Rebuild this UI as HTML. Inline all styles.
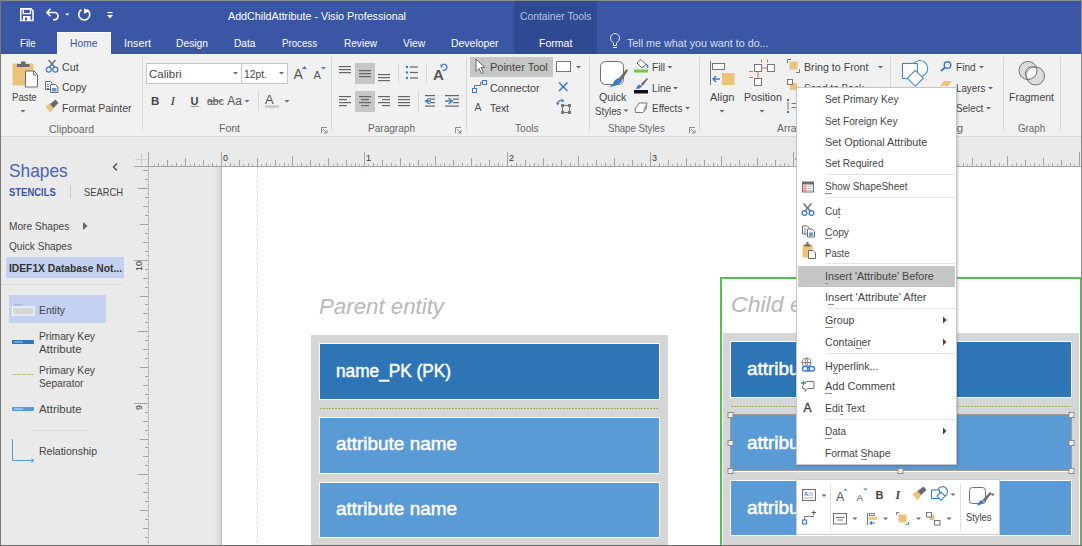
<!DOCTYPE html>
<html><head><meta charset="utf-8">
<style>
*{margin:0;padding:0;box-sizing:border-box}
html,body{width:1082px;height:546px;overflow:hidden;background:#EAEAEA}
body{position:relative;font-family:"Liberation Sans",sans-serif;font-size:11px;color:#444}
.a{position:absolute}
.t{position:absolute;white-space:pre;line-height:1}
.s{position:absolute;overflow:visible}
</style></head><body>
<div class="a" style="left:0px;top:0px;width:1082px;height:54px;background:#3A56A5;"></div>
<div class="a" style="left:514px;top:0px;width:83px;height:54px;background:#2F4993;"></div>
<div class="t" style="left:228px;top:11.27px;font-size:11.5px;color:#FFFFFF;font-weight:400;font-style:normal;transform-origin:0 0;transform:scaleX(0.9323);">AddChildAttribute - Visio Professional</div>
<div class="t" style="left:520px;top:11.19px;font-size:11px;color:#B7C2E2;font-weight:400;font-style:normal;transform-origin:0 0;transform:scaleX(0.9379);">Container Tools</div>
<div class="a" style="left:57px;top:32px;width:54px;height:22px;background:#F1F1F1;border:1px solid #FAFAFA;border-bottom:none"></div>
<div class="t" style="left:19.5px;top:37.77px;font-size:11.5px;color:#FFFFFF;font-weight:400;font-style:normal;transform-origin:0 0;transform:scaleX(0.8418);">File</div>
<div class="t" style="left:69.7px;top:37.77px;font-size:11.5px;color:#3A56A5;font-weight:400;font-style:normal;transform-origin:0 0;transform:scaleX(0.8961);">Home</div>
<div class="t" style="left:124px;top:37.77px;font-size:11.5px;color:#FFFFFF;font-weight:400;font-style:normal;transform-origin:0 0;transform:scaleX(0.9386);">Insert</div>
<div class="t" style="left:176px;top:37.77px;font-size:11.5px;color:#FFFFFF;font-weight:400;font-style:normal;transform-origin:0 0;transform:scaleX(0.8935);">Design</div>
<div class="t" style="left:234px;top:37.77px;font-size:11.5px;color:#FFFFFF;font-weight:400;font-style:normal;transform-origin:0 0;transform:scaleX(0.8849);">Data</div>
<div class="t" style="left:282px;top:37.77px;font-size:11.5px;color:#FFFFFF;font-weight:400;font-style:normal;transform-origin:0 0;transform:scaleX(0.8424);">Process</div>
<div class="t" style="left:343.5px;top:37.77px;font-size:11.5px;color:#FFFFFF;font-weight:400;font-style:normal;transform-origin:0 0;transform:scaleX(0.8749);">Review</div>
<div class="t" style="left:402.5px;top:37.77px;font-size:11.5px;color:#FFFFFF;font-weight:400;font-style:normal;transform-origin:0 0;transform:scaleX(0.8981);">View</div>
<div class="t" style="left:450.7px;top:37.77px;font-size:11.5px;color:#FFFFFF;font-weight:400;font-style:normal;transform-origin:0 0;transform:scaleX(0.9080);">Developer</div>
<div class="t" style="left:538.6px;top:37.77px;font-size:11.5px;color:#FFFFFF;font-weight:400;font-style:normal;transform-origin:0 0;transform:scaleX(0.9170);">Format</div>
<div class="t" style="left:627px;top:37.69px;font-size:11px;color:#D9DFF0;font-weight:400;font-style:normal;transform-origin:0 0;transform:scaleX(0.9771);">Tell me what you want to do...</div>
<div class="a" style="left:0px;top:54px;width:1082px;height:82px;background:#F1F1F1;"></div>
<div class="a" style="left:0px;top:136px;width:1082px;height:1px;background:#D5D5D5;"></div>
<div class="a" style="left:142px;top:57px;width:1px;height:75px;background:#DADADA;"></div>
<div class="a" style="left:331px;top:57px;width:1px;height:75px;background:#DADADA;"></div>
<div class="a" style="left:466px;top:57px;width:1px;height:75px;background:#DADADA;"></div>
<div class="a" style="left:589px;top:57px;width:1px;height:75px;background:#DADADA;"></div>
<div class="a" style="left:699px;top:57px;width:1px;height:75px;background:#DADADA;"></div>
<div class="a" style="left:890px;top:57px;width:1px;height:75px;background:#DADADA;"></div>
<div class="a" style="left:1003px;top:57px;width:1px;height:75px;background:#DADADA;"></div>
<div class="a" style="left:1060px;top:57px;width:1px;height:75px;background:#DADADA;"></div>
<div class="t" style="left:11.5px;top:92.27px;font-size:11.5px;color:#444444;font-weight:400;font-style:normal;transform-origin:0 0;transform:scaleX(0.8395);">Paste</div>
<div class="t" style="left:62px;top:61.77px;font-size:11.5px;color:#444444;font-weight:400;font-style:normal;transform-origin:0 0;transform:scaleX(0.9326);">Cut</div>
<div class="t" style="left:62px;top:82.27px;font-size:11.5px;color:#444444;font-weight:400;font-style:normal;transform-origin:0 0;transform:scaleX(0.9159);">Copy</div>
<div class="t" style="left:62px;top:102.77px;font-size:11.5px;color:#444444;font-weight:400;font-style:normal;transform-origin:0 0;transform:scaleX(0.9137);">Format Painter</div>
<div class="t" style="left:48.8px;top:123.57px;font-size:11.5px;color:#666666;font-weight:400;font-style:normal;transform-origin:0 0;transform:scaleX(0.9140);">Clipboard</div>
<div class="a" style="left:146px;top:63px;width:96px;height:21px;background:#FFFFFF;border:1px solid #C6C6C6"></div>
<div class="a" style="left:241px;top:63px;width:47px;height:21px;background:#FFFFFF;border:1px solid #C6C6C6"></div>
<div class="t" style="left:149px;top:69.27px;font-size:11.5px;color:#444444;font-weight:400;font-style:normal;transform-origin:0 0;transform:scaleX(0.9971);">Calibri</div>
<div class="t" style="left:243.7px;top:69.27px;font-size:11.5px;color:#444444;font-weight:400;font-style:normal;transform-origin:0 0;transform:scaleX(0.8992);">12pt.</div>
<div class="t" style="left:218.5px;top:123.27px;font-size:11.5px;color:#666666;font-weight:400;font-style:normal;transform-origin:0 0;transform:scaleX(0.9124);">Font</div>
<div class="t" style="left:367.8px;top:123.27px;font-size:11.5px;color:#666666;font-weight:400;font-style:normal;transform-origin:0 0;transform:scaleX(0.8749);">Paragraph</div>
<div class="a" style="left:470px;top:57px;width:83px;height:20px;background:#C6C6C6;"></div>
<div class="t" style="left:489.6px;top:61.77px;font-size:11.5px;color:#444444;font-weight:400;font-style:normal;transform-origin:0 0;transform:scaleX(0.9549);">Pointer Tool</div>
<div class="t" style="left:489.6px;top:82.57px;font-size:11.5px;color:#444444;font-weight:400;font-style:normal;transform-origin:0 0;transform:scaleX(0.9347);">Connector</div>
<div class="t" style="left:489.6px;top:102.77px;font-size:11.5px;color:#444444;font-weight:400;font-style:normal;transform-origin:0 0;transform:scaleX(0.9007);">Text</div>
<div class="t" style="left:515px;top:123.27px;font-size:11.5px;color:#666666;font-weight:400;font-style:normal;transform-origin:0 0;transform:scaleX(0.8824);">Tools</div>
<div class="t" style="left:599px;top:91.77px;font-size:11.5px;color:#444444;font-weight:400;font-style:normal;transform-origin:0 0;transform:scaleX(0.9318);">Quick</div>
<div class="t" style="left:594.8px;top:105.87px;font-size:11.5px;color:#444444;font-weight:400;font-style:normal;transform-origin:0 0;transform:scaleX(0.8427);">Styles</div>
<div class="t" style="left:651.5px;top:61.77px;font-size:11.5px;color:#444444;font-weight:400;font-style:normal;transform-origin:0 0;transform:scaleX(0.8842);">Fill</div>
<div class="t" style="left:651.5px;top:82.57px;font-size:11.5px;color:#444444;font-weight:400;font-style:normal;transform-origin:0 0;transform:scaleX(0.8874);">Line</div>
<div class="t" style="left:651.5px;top:102.77px;font-size:11.5px;color:#444444;font-weight:400;font-style:normal;transform-origin:0 0;transform:scaleX(0.8697);">Effects</div>
<div class="t" style="left:608.3px;top:123.27px;font-size:11.5px;color:#666666;font-weight:400;font-style:normal;transform-origin:0 0;transform:scaleX(0.8367);">Shape Styles</div>
<div class="t" style="left:710px;top:91.77px;font-size:11.5px;color:#444444;font-weight:400;font-style:normal;transform-origin:0 0;transform:scaleX(0.9539);">Align</div>
<div class="t" style="left:743.5px;top:91.77px;font-size:11.5px;color:#444444;font-weight:400;font-style:normal;transform-origin:0 0;transform:scaleX(0.9237);">Position</div>
<div class="t" style="left:804.2px;top:61.77px;font-size:11.5px;color:#444444;font-weight:400;font-style:normal;transform-origin:0 0;transform:scaleX(0.9258);">Bring to Front</div>
<div class="t" style="left:804.2px;top:82.57px;font-size:11.5px;color:#444444;font-weight:400;font-style:normal;transform-origin:0 0;transform:scaleX(0.8771);">Send to Back</div>
<div class="t" style="left:776.9px;top:123.27px;font-size:11.5px;color:#666666;font-weight:400;font-style:normal;transform-origin:0 0;transform:scaleX(0.9042);">Arrange</div>
<div class="t" style="left:956.2px;top:61.77px;font-size:11.5px;color:#444444;font-weight:400;font-style:normal;transform-origin:0 0;transform:scaleX(0.8804);">Find</div>
<div class="t" style="left:956px;top:82.57px;font-size:11.5px;color:#444444;font-weight:400;font-style:normal;transform-origin:0 0;transform:scaleX(0.8485);">Layers</div>
<div class="t" style="left:956px;top:102.77px;font-size:11.5px;color:#444444;font-weight:400;font-style:normal;transform-origin:0 0;transform:scaleX(0.8540);">Select</div>
<div class="t" style="left:928px;top:123.27px;font-size:11.5px;color:#666666;font-weight:400;font-style:normal;transform-origin:0 0;transform:scaleX(0.9951);">Editing</div>
<div class="t" style="left:1009px;top:91.77px;font-size:11.5px;color:#444444;font-weight:400;font-style:normal;transform-origin:0 0;transform:scaleX(0.9143);">Fragment</div>
<div class="t" style="left:1018.4px;top:123.27px;font-size:11.5px;color:#666666;font-weight:400;font-style:normal;transform-origin:0 0;transform:scaleX(0.8508);">Graph</div>
<svg class="s" style="left:0;top:0" width="1082" height="546"><rect x="12.5" y="63.5" width="21" height="22" rx="1" fill="#EBC37B"/><path d="M17 67 V64 H21 V61.5 H25.5 V64 H29.5 V67 Z" fill="#6A6A6A"/><path d="M25.5 71 H34 L37.5 74.5 V87 H25.5 Z" fill="#FFFFFF" stroke="#6A6A6A" stroke-width="1"/><path d="M33.5 71 V75 H37.5" fill="none" stroke="#6A6A6A" stroke-width="1"/><path d="M20.5 110 H25.5 L23 112.5 Z" fill="#6A6A6A"/><path d="M48.5 60 L55 67.5 M55.5 60 L49 67.5" stroke="#6A6A6A" stroke-width="1.4" fill="none"/><circle cx="48.8" cy="69.6" r="2.5" fill="none" stroke="#3D7CC9" stroke-width="1.3"/><circle cx="55.4" cy="69.6" r="2.5" fill="none" stroke="#3D7CC9" stroke-width="1.3"/><path d="M45.5 81.5 H50.5 L52 83 V89.5 H45.5 Z" fill="#FFFFFF" stroke="#6A6A6A" stroke-width="1"/><path d="M47 84.5 H49 M47 86.5 H49 M47 88.5 H49" stroke="#3D7CC9" stroke-width="1"/><path d="M50.5 84.5 H55.5 L58 87 V92.5 H50.5 Z" fill="#FFFFFF" stroke="#6A6A6A" stroke-width="1"/><rect x="52" y="88" width="4.5" height="3.5" fill="#3D7CC9" opacity="0.8"/><path d="M45.5 106.5 L50.5 103 L54 107.5 L50.5 113 Z" fill="#EBC37B"/><path d="M50 104 L55.5 99.5 L58.5 103 L53.5 108 Z" fill="#6A6A6A"/><path d="M233 72 H238 L235.5 74.5 Z" fill="#6A6A6A"/><path d="M279 72 H284 L281.5 74.5 Z" fill="#6A6A6A"/><text x="293.5" y="79" font-family="Liberation Sans" font-size="14" fill="#555">A</text><path d="M302 69 L304.5 66 L307 69 Z" fill="#3D7CC9"/><text x="313.5" y="79" font-family="Liberation Sans" font-size="11" fill="#555">A</text><path d="M321 67 H326 L323.5 69.5 Z" fill="#3D7CC9"/><text x="151" y="104.5" font-family="Liberation Sans" font-size="11.5" font-weight="700" fill="#444">B</text><text x="170.5" y="105" font-family="Liberation Serif" font-size="13.5" font-style="italic" fill="#444">I</text><text x="190.5" y="104.5" font-family="Liberation Sans" font-size="11" font-weight="700" fill="#444">U</text><rect x="190.5" y="106" width="8.5" height="1" fill="#999"/><text x="207" y="104.5" font-family="Liberation Sans" font-size="10.5" fill="#555">abc</text><rect x="207" y="100.5" width="15" height="1" fill="#555"/><text x="227.3" y="104.5" font-family="Liberation Sans" font-size="12" fill="#555">Aa</text><path d="M244.5 100 H249.5 L247 102.5 Z" fill="#6A6A6A"/><rect x="258" y="91" width="1" height="19" fill="#D5D5D5"/><text x="265" y="104" font-family="Liberation Sans" font-size="13" fill="#555">A</text><rect x="265" y="105.5" width="14" height="2" fill="#BDBDBD"/><path d="M284.5 100 H289.5 L287 102.5 Z" fill="#6A6A6A"/><path d="M321.5 133 V127.5 H327" fill="none" stroke="#8A8A8A" stroke-width="1"/><path d="M323 129 L327 133 M327 130 V133 H324" fill="none" stroke="#8A8A8A" stroke-width="1"/><path d="M455.5 133 V127.5 H461" fill="none" stroke="#8A8A8A" stroke-width="1"/><path d="M457 129 L461 133 M461 130 V133 H458" fill="none" stroke="#8A8A8A" stroke-width="1"/><path d="M689.5 133 V127.5 H695" fill="none" stroke="#8A8A8A" stroke-width="1"/><path d="M691 129 L695 133 M695 130 V133 H692" fill="none" stroke="#8A8A8A" stroke-width="1"/><rect x="355" y="63" width="20" height="21" fill="#C6C6C6"/><rect x="355" y="91" width="20" height="21" fill="#C6C6C6"/><rect x="339" y="66" width="12" height="1.2" fill="#666"/><rect x="339" y="69" width="12" height="1.2" fill="#666"/><rect x="339" y="72" width="12" height="1.2" fill="#666"/><rect x="359" y="70" width="12" height="1.2" fill="#666"/><rect x="359" y="73" width="12" height="1.2" fill="#666"/><rect x="359" y="76" width="12" height="1.2" fill="#666"/><rect x="378" y="74" width="12" height="1.2" fill="#666"/><rect x="378" y="77" width="12" height="1.2" fill="#666"/><rect x="378" y="80" width="12" height="1.2" fill="#666"/><rect x="398" y="63" width="1" height="20" fill="#D5D5D5"/><circle cx="407" cy="67.0" r="1.2" fill="#3D7CC9"/><rect x="410" y="66.4" width="8" height="1.2" fill="#666"/><circle cx="407" cy="72.5" r="1.2" fill="#3D7CC9"/><rect x="410" y="71.9" width="8" height="1.2" fill="#666"/><circle cx="407" cy="78.0" r="1.2" fill="#3D7CC9"/><rect x="410" y="77.4" width="8" height="1.2" fill="#666"/><rect x="426" y="63" width="1" height="20" fill="#D5D5D5"/><text x="433" y="79.5" font-family="Liberation Sans" font-size="15" font-weight="700" fill="#555">A</text><path d="M442.5 70 A3 3 0 1 0 441.5 65.5" fill="none" stroke="#3D7CC9" stroke-width="1.2"/><path d="M440 64 L443 66.5 L441 68 Z" fill="#3D7CC9"/><rect x="339" y="96" width="12" height="1.2" fill="#666"/><rect x="339" y="99" width="8" height="1.2" fill="#666"/><rect x="339" y="102" width="12" height="1.2" fill="#666"/><rect x="339" y="105" width="8" height="1.2" fill="#666"/><rect x="359" y="96" width="12" height="1.2" fill="#666"/><rect x="361" y="99" width="8" height="1.2" fill="#666"/><rect x="359" y="102" width="12" height="1.2" fill="#666"/><rect x="361" y="105" width="8" height="1.2" fill="#666"/><rect x="378" y="96" width="12" height="1.2" fill="#666"/><rect x="382" y="99" width="8" height="1.2" fill="#666"/><rect x="378" y="102" width="12" height="1.2" fill="#666"/><rect x="382" y="105" width="8" height="1.2" fill="#666"/><rect x="398" y="96" width="12" height="1.2" fill="#666"/><rect x="398" y="99" width="12" height="1.2" fill="#666"/><rect x="398" y="102" width="12" height="1.2" fill="#666"/><rect x="398" y="105" width="12" height="1.2" fill="#666"/><rect x="418" y="91" width="1" height="20" fill="#D5D5D5"/><rect x="425" y="95.0" width="10" height="1.2" fill="#666"/><rect x="430" y="98.5" width="5" height="1.2" fill="#666"/><rect x="430" y="102.0" width="5" height="1.2" fill="#666"/><rect x="425" y="105.5" width="10" height="1.2" fill="#666"/><path d="M429.5 98 L425.5 101 L429.5 104 M426 101 H431" fill="none" stroke="#3D7CC9" stroke-width="1.3"/><rect x="445" y="95.0" width="14" height="1.2" fill="#666"/><rect x="453" y="98.5" width="6" height="1.2" fill="#666"/><rect x="453" y="102.0" width="6" height="1.2" fill="#666"/><rect x="445" y="105.5" width="14" height="1.2" fill="#666"/><path d="M448.5 98 L452.5 101 L448.5 104 M445 101 H452" fill="none" stroke="#3D7CC9" stroke-width="1.3"/><path d="M476 59 V71.5 L479 68.5 L481.5 73.5 L483.5 72.5 L481 67.5 H485 Z" fill="#FFFFFF" stroke="#666" stroke-width="1"/><rect x="556.5" y="61.5" width="14" height="10" fill="#FFFFFF" stroke="#777" stroke-width="1"/><path d="M576 66 H581 L578.5 68.5 Z" fill="#6A6A6A"/><rect x="472.5" y="88.5" width="4" height="4" fill="none" stroke="#3D7CC9" stroke-width="1"/><rect x="482.5" y="80.5" width="4" height="4" fill="none" stroke="#3D7CC9" stroke-width="1"/><path d="M474.5 88.5 V85.5 H480.5 V82.5 H482.5" fill="none" stroke="#777" stroke-width="1"/><path d="M559 82.5 L567.5 91 M567.5 82.5 L559 91" stroke="#3D7CC9" stroke-width="1.6"/><text x="474.5" y="111" font-family="Liberation Sans" font-size="10.5" fill="#555">A</text><rect x="562.5" y="105.5" width="7" height="7" fill="none" stroke="#777" stroke-width="1.2"/><rect x="561.0" y="104.0" width="3" height="3" fill="#777"/><rect x="568.0" y="104.0" width="3" height="3" fill="#777"/><rect x="561.0" y="111.0" width="3" height="3" fill="#777"/><rect x="568.0" y="111.0" width="3" height="3" fill="#777"/><path d="M557.5 104 A4 4 0 0 1 563 100.5" fill="none" stroke="#3D7CC9" stroke-width="1.2"/><path d="M562 99 L564.5 101 L561.5 102.5 Z" fill="#3D7CC9"/><path d="M556 102.5 L557.5 105.5 L559.5 103 Z" fill="#3D7CC9"/><rect x="600.5" y="61.5" width="23" height="23" rx="5" fill="#FFFFFF" stroke="#6E6E6E" stroke-width="1"/><path d="M613 84 Q614 79 619 78 L622 81 Q619 86 609 87 Z" fill="#3D7CC9"/><path d="M618.5 78.5 L626.5 69 L628 70.5 L621.5 81 Z" fill="#6E6E6E"/><path d="M623.5 109.5 H628.5 L626 112 Z" fill="#6A6A6A"/><path d="M637 63 L641 59.5 L646 64.5 L642 68 Z" fill="#FFFFFF" stroke="#666" stroke-width="1"/><path d="M646 64 Q648.5 66 647.5 68" fill="none" stroke="#3D7CC9" stroke-width="1.3"/><rect x="634" y="69.5" width="14" height="3" fill="#7BC443"/><path d="M667.5 66 H672.5 L670 68.5 Z" fill="#6A6A6A"/><path d="M636 89 Q637 85 640 84.5 L642 86.5 Q640 89 636 89 Z" fill="#3D7CC9"/><path d="M641 84 L647 78 L648 79 L642.5 86 Z" fill="#666"/><rect x="634" y="90" width="14" height="3.5" fill="#111"/><path d="M673 87 H678 L675.5 89.5 Z" fill="#6A6A6A"/><path d="M635 109 L639 103 H647 L646 109 L643 112.5 H635.5 Z" fill="#FFFFFF" stroke="#777" stroke-width="1"/><path d="M643 112.5 L646 109 L647 103 L644 108 Z" fill="#9A9A9A"/><path d="M685 107 H690 L687.5 109.5 Z" fill="#6A6A6A"/><rect x="710" y="61" width="1" height="24" fill="#777"/><rect x="712.5" y="63.5" width="12" height="6" fill="#FFFFFF" stroke="#777" stroke-width="1"/><rect x="722" y="73" width="12.5" height="12" fill="#EBC37B"/><path d="M713 79 H720 M716 76 L713 79 L716 82" fill="none" stroke="#3D7CC9" stroke-width="1.4"/><path d="M719.5 110 H724.5 L722 112.5 Z" fill="#6A6A6A"/><rect x="754.5" y="64.5" width="7" height="7" fill="#FFFFFF" stroke="#777" stroke-width="1"/><rect x="767.5" y="64.5" width="7" height="7" fill="#FFFFFF" stroke="#777" stroke-width="1"/><rect x="754.5" y="78.5" width="7" height="7" fill="#FFFFFF" stroke="#777" stroke-width="1"/><path d="M762 68 H767 M758 72 V78" stroke="#E07050" stroke-width="1"/><path d="M761.5 59.5 V62.5 M767.5 59.5 V62.5 M749 71.5 H753 M749 77.5 H753" stroke="#E07050" stroke-width="1"/><path d="M759.5 110 H764.5 L762 112.5 Z" fill="#6A6A6A"/><path d="M787.5 63 V59.5 H791" fill="none" stroke="#777" stroke-width="1"/><path d="M799.5 69 V72.5 H796" fill="none" stroke="#777" stroke-width="1"/><rect x="789.5" y="61.5" width="8" height="8" fill="#EBC37B"/><path d="M878 66 H883 L880.5 68.5 Z" fill="#6A6A6A"/><rect x="790" y="83" width="7" height="7" fill="#EBC37B"/><rect x="787.5" y="79.5" width="5" height="5" fill="#FFFFFF" stroke="#777" stroke-width="1"/><rect x="787" y="99" width="2" height="2" fill="#3D7CC9"/><rect x="787" y="111" width="2" height="2" fill="#3D7CC9"/><path d="M788 102 V110 M791.5 103.5 H797 M791.5 107.5 H797" stroke="#777" stroke-width="1"/><circle cx="919.7" cy="68.5" r="8" fill="#FFFFFF" stroke="#4A86C8" stroke-width="1.1"/><rect x="902.5" y="63.5" width="15" height="15" fill="#FFFFFF" stroke="#4A86C8" stroke-width="1.1"/><path d="M915.3 70.3 L923.3 78.2 L915.3 86.1 L907.3 78.2 Z" fill="#FFFFFF" stroke="#4A86C8" stroke-width="1.1"/><circle cx="947.5" cy="65" r="3.3" fill="none" stroke="#3D7CC9" stroke-width="1.4"/><path d="M945 67.5 L941 71" stroke="#3D7CC9" stroke-width="2"/><path d="M940 86 L944 81 H952 L948 86 Z" fill="#EBC37B"/><path d="M979 66 H984 L981.5 68.5 Z" fill="#6A6A6A"/><path d="M988 87 H993 L990.5 89.5 Z" fill="#6A6A6A"/><path d="M986 107 H991 L988.5 109.5 Z" fill="#6A6A6A"/><defs><clipPath id="fragc"><circle cx="1035.5" cy="76" r="9"/></clipPath></defs><circle cx="1028" cy="70.5" r="9" fill="#DCDCDC" stroke="#707070" stroke-width="1"/><circle cx="1035.5" cy="76" r="9" fill="#DCDCDC" stroke="#707070" stroke-width="1"/><circle cx="1028" cy="70.5" r="9" fill="#F4F4F4" stroke="#707070" stroke-width="1" clip-path="url(#fragc)"/><path d="M1029 80 A7 7 0 0 1 1036 67.5" fill="none" stroke="#707070" stroke-width="1"/><path d="M613.5 45.5 V43 Q610.5 41 610.5 38 A4.5 4.5 0 0 1 619.5 38 Q619.5 41 616.5 43 V45.5 Z" fill="none" stroke="#E6EAF5" stroke-width="1"/><rect x="613" y="47" width="4" height="1" fill="#E6EAF5"/><path d="M20.8 8.8 H31 L33 10.8 V20.6 H20.8 Z" fill="none" stroke="#FFFFFF" stroke-width="1.5"/><rect x="23.2" y="9" width="7.3" height="4.6" fill="none" stroke="#FFFFFF" stroke-width="1.3"/><rect x="23" y="16" width="7.5" height="4.5" fill="#FFFFFF"/><rect x="25" y="17.5" width="2" height="3" fill="#3A56A5"/><path d="M47 12.5 H54.5 A3.6 3.6 0 0 1 54.5 19.7 H53" fill="none" stroke="#FFFFFF" stroke-width="1.6"/><path d="M50.5 8.8 L46.8 12.5 L50.5 16.2" fill="none" stroke="#FFFFFF" stroke-width="1.6"/><path d="M65 13.5 H69.5 L67.25 15.8 Z" fill="#FFFFFF"/><path d="M81.5 9.8 A5.5 5.5 0 1 0 87 9.8" fill="none" stroke="#FFFFFF" stroke-width="1.6"/><path d="M84 8.2 L84 13.8 L89.5 11.2 Z" fill="#FFFFFF"/><rect x="107.5" y="12" width="5" height="1.2" fill="#FFFFFF"/><path d="M107 15 H113 L110 18.5 Z" fill="#FFFFFF"/></svg>
<div class="t" style="left:9.2px;top:161.42px;font-size:19px;color:#4A64AE;font-weight:400;font-style:normal;transform-origin:0 0;transform:scaleX(0.9123);">Shapes</div>
<div class="t" style="left:9.4px;top:187.09px;font-size:11px;color:#3A56A5;font-weight:700;font-style:normal;transform-origin:0 0;transform:scaleX(0.8602);">STENCILS</div>
<div class="a" style="left:70px;top:185px;width:1px;height:13px;background:#C8C8C8;"></div>
<div class="t" style="left:83.5px;top:186.67px;font-size:11.5px;color:#444444;font-weight:400;font-style:normal;transform-origin:0 0;transform:scaleX(0.8115);">SEARCH</div>
<div class="t" style="left:8.7px;top:220.87px;font-size:11.5px;color:#444444;font-weight:400;font-style:normal;transform-origin:0 0;transform:scaleX(0.8815);">More Shapes</div>
<div class="t" style="left:8.7px;top:241.27px;font-size:11.5px;color:#444444;font-weight:400;font-style:normal;transform-origin:0 0;transform:scaleX(0.8798);">Quick Shapes</div>
<div class="a" style="left:6px;top:257px;width:118px;height:21px;background:#C5D1F0;"></div>
<div class="t" style="left:8.7px;top:263.49px;font-size:11px;color:#333333;font-weight:700;font-style:normal;transform-origin:0 0;transform:scaleX(0.9335);">IDEF1X Database Not...</div>
<div class="a" style="left:1px;top:284px;width:122px;height:1px;background:#DCDCDC;"></div>
<div class="a" style="left:9px;top:295px;width:97px;height:28px;background:#C5D1F0;"></div>
<div class="t" style="left:39.3px;top:305.27px;font-size:11.5px;color:#444444;font-weight:400;font-style:normal;transform-origin:0 0;transform:scaleX(0.9039);">Entity</div>
<div class="t" style="left:39.3px;top:331.07px;font-size:11.5px;color:#444444;font-weight:400;font-style:normal;transform-origin:0 0;transform:scaleX(0.8942);">Primary Key</div>
<div class="t" style="left:39.3px;top:343.57px;font-size:11.5px;color:#444444;font-weight:400;font-style:normal;transform-origin:0 0;transform:scaleX(0.9923);">Attribute</div>
<div class="t" style="left:39.3px;top:365.07px;font-size:11.5px;color:#444444;font-weight:400;font-style:normal;transform-origin:0 0;transform:scaleX(0.8942);">Primary Key</div>
<div class="t" style="left:39.3px;top:377.67px;font-size:11.5px;color:#444444;font-weight:400;font-style:normal;transform-origin:0 0;transform:scaleX(0.8809);">Separator</div>
<div class="t" style="left:39.3px;top:404.07px;font-size:11.5px;color:#444444;font-weight:400;font-style:normal;transform-origin:0 0;transform:scaleX(0.9923);">Attribute</div>
<div class="a" style="left:30px;top:430px;width:59px;height:1px;background:#DCDCDC;"></div>
<div class="t" style="left:39.3px;top:445.77px;font-size:11.5px;color:#444444;font-weight:400;font-style:normal;transform-origin:0 0;transform:scaleX(0.9163);">Relationship</div>
<svg class="s" style="left:0;top:0" width="1082" height="546" shape-rendering="crispEdges"><rect x="134" y="166" width="947" height="1" fill="#A3A3A3"/><rect x="154" y="164" width="1" height="2" fill="#B8B8B8"/><rect x="158" y="163" width="1" height="3" fill="#A3A3A3"/><rect x="163" y="164" width="1" height="2" fill="#B8B8B8"/><rect x="167" y="160" width="1" height="6" fill="#A3A3A3"/><rect x="172" y="164" width="1" height="2" fill="#B8B8B8"/><rect x="176" y="163" width="1" height="3" fill="#A3A3A3"/><rect x="181" y="164" width="1" height="2" fill="#B8B8B8"/><rect x="185" y="158" width="1" height="8" fill="#A3A3A3"/><rect x="190" y="164" width="1" height="2" fill="#B8B8B8"/><rect x="194" y="163" width="1" height="3" fill="#A3A3A3"/><rect x="199" y="164" width="1" height="2" fill="#B8B8B8"/><rect x="203" y="160" width="1" height="6" fill="#A3A3A3"/><rect x="208" y="164" width="1" height="2" fill="#B8B8B8"/><rect x="212" y="163" width="1" height="3" fill="#A3A3A3"/><rect x="216" y="164" width="1" height="2" fill="#B8B8B8"/><rect x="221" y="152" width="1" height="14" fill="#A3A3A3"/><rect x="225" y="164" width="1" height="2" fill="#B8B8B8"/><rect x="230" y="163" width="1" height="3" fill="#A3A3A3"/><rect x="234" y="164" width="1" height="2" fill="#B8B8B8"/><rect x="239" y="160" width="1" height="6" fill="#A3A3A3"/><rect x="243" y="164" width="1" height="2" fill="#B8B8B8"/><rect x="248" y="163" width="1" height="3" fill="#A3A3A3"/><rect x="252" y="164" width="1" height="2" fill="#B8B8B8"/><rect x="257" y="158" width="1" height="8" fill="#A3A3A3"/><rect x="261" y="164" width="1" height="2" fill="#B8B8B8"/><rect x="266" y="163" width="1" height="3" fill="#A3A3A3"/><rect x="270" y="164" width="1" height="2" fill="#B8B8B8"/><rect x="275" y="160" width="1" height="6" fill="#A3A3A3"/><rect x="279" y="164" width="1" height="2" fill="#B8B8B8"/><rect x="284" y="163" width="1" height="3" fill="#A3A3A3"/><rect x="288" y="164" width="1" height="2" fill="#B8B8B8"/><rect x="292" y="156" width="1" height="10" fill="#A3A3A3"/><rect x="297" y="164" width="1" height="2" fill="#B8B8B8"/><rect x="301" y="163" width="1" height="3" fill="#A3A3A3"/><rect x="306" y="164" width="1" height="2" fill="#B8B8B8"/><rect x="310" y="160" width="1" height="6" fill="#A3A3A3"/><rect x="315" y="164" width="1" height="2" fill="#B8B8B8"/><rect x="319" y="163" width="1" height="3" fill="#A3A3A3"/><rect x="324" y="164" width="1" height="2" fill="#B8B8B8"/><rect x="328" y="158" width="1" height="8" fill="#A3A3A3"/><rect x="333" y="164" width="1" height="2" fill="#B8B8B8"/><rect x="337" y="163" width="1" height="3" fill="#A3A3A3"/><rect x="342" y="164" width="1" height="2" fill="#B8B8B8"/><rect x="346" y="160" width="1" height="6" fill="#A3A3A3"/><rect x="351" y="164" width="1" height="2" fill="#B8B8B8"/><rect x="355" y="163" width="1" height="3" fill="#A3A3A3"/><rect x="359" y="164" width="1" height="2" fill="#B8B8B8"/><rect x="364" y="152" width="1" height="14" fill="#A3A3A3"/><rect x="368" y="164" width="1" height="2" fill="#B8B8B8"/><rect x="373" y="163" width="1" height="3" fill="#A3A3A3"/><rect x="377" y="164" width="1" height="2" fill="#B8B8B8"/><rect x="382" y="160" width="1" height="6" fill="#A3A3A3"/><rect x="386" y="164" width="1" height="2" fill="#B8B8B8"/><rect x="391" y="163" width="1" height="3" fill="#A3A3A3"/><rect x="395" y="164" width="1" height="2" fill="#B8B8B8"/><rect x="400" y="158" width="1" height="8" fill="#A3A3A3"/><rect x="404" y="164" width="1" height="2" fill="#B8B8B8"/><rect x="409" y="163" width="1" height="3" fill="#A3A3A3"/><rect x="413" y="164" width="1" height="2" fill="#B8B8B8"/><rect x="418" y="160" width="1" height="6" fill="#A3A3A3"/><rect x="422" y="164" width="1" height="2" fill="#B8B8B8"/><rect x="427" y="163" width="1" height="3" fill="#A3A3A3"/><rect x="431" y="164" width="1" height="2" fill="#B8B8B8"/><rect x="435" y="156" width="1" height="10" fill="#A3A3A3"/><rect x="440" y="164" width="1" height="2" fill="#B8B8B8"/><rect x="444" y="163" width="1" height="3" fill="#A3A3A3"/><rect x="449" y="164" width="1" height="2" fill="#B8B8B8"/><rect x="453" y="160" width="1" height="6" fill="#A3A3A3"/><rect x="458" y="164" width="1" height="2" fill="#B8B8B8"/><rect x="462" y="163" width="1" height="3" fill="#A3A3A3"/><rect x="467" y="164" width="1" height="2" fill="#B8B8B8"/><rect x="471" y="158" width="1" height="8" fill="#A3A3A3"/><rect x="476" y="164" width="1" height="2" fill="#B8B8B8"/><rect x="480" y="163" width="1" height="3" fill="#A3A3A3"/><rect x="485" y="164" width="1" height="2" fill="#B8B8B8"/><rect x="489" y="160" width="1" height="6" fill="#A3A3A3"/><rect x="494" y="164" width="1" height="2" fill="#B8B8B8"/><rect x="498" y="163" width="1" height="3" fill="#A3A3A3"/><rect x="502" y="164" width="1" height="2" fill="#B8B8B8"/><rect x="507" y="152" width="1" height="14" fill="#A3A3A3"/><rect x="511" y="164" width="1" height="2" fill="#B8B8B8"/><rect x="516" y="163" width="1" height="3" fill="#A3A3A3"/><rect x="520" y="164" width="1" height="2" fill="#B8B8B8"/><rect x="525" y="160" width="1" height="6" fill="#A3A3A3"/><rect x="529" y="164" width="1" height="2" fill="#B8B8B8"/><rect x="534" y="163" width="1" height="3" fill="#A3A3A3"/><rect x="538" y="164" width="1" height="2" fill="#B8B8B8"/><rect x="543" y="158" width="1" height="8" fill="#A3A3A3"/><rect x="547" y="164" width="1" height="2" fill="#B8B8B8"/><rect x="552" y="163" width="1" height="3" fill="#A3A3A3"/><rect x="556" y="164" width="1" height="2" fill="#B8B8B8"/><rect x="561" y="160" width="1" height="6" fill="#A3A3A3"/><rect x="565" y="164" width="1" height="2" fill="#B8B8B8"/><rect x="570" y="163" width="1" height="3" fill="#A3A3A3"/><rect x="574" y="164" width="1" height="2" fill="#B8B8B8"/><rect x="578" y="156" width="1" height="10" fill="#A3A3A3"/><rect x="583" y="164" width="1" height="2" fill="#B8B8B8"/><rect x="587" y="163" width="1" height="3" fill="#A3A3A3"/><rect x="592" y="164" width="1" height="2" fill="#B8B8B8"/><rect x="596" y="160" width="1" height="6" fill="#A3A3A3"/><rect x="601" y="164" width="1" height="2" fill="#B8B8B8"/><rect x="605" y="163" width="1" height="3" fill="#A3A3A3"/><rect x="610" y="164" width="1" height="2" fill="#B8B8B8"/><rect x="614" y="158" width="1" height="8" fill="#A3A3A3"/><rect x="619" y="164" width="1" height="2" fill="#B8B8B8"/><rect x="623" y="163" width="1" height="3" fill="#A3A3A3"/><rect x="628" y="164" width="1" height="2" fill="#B8B8B8"/><rect x="632" y="160" width="1" height="6" fill="#A3A3A3"/><rect x="637" y="164" width="1" height="2" fill="#B8B8B8"/><rect x="641" y="163" width="1" height="3" fill="#A3A3A3"/><rect x="645" y="164" width="1" height="2" fill="#B8B8B8"/><rect x="650" y="152" width="1" height="14" fill="#A3A3A3"/><rect x="654" y="164" width="1" height="2" fill="#B8B8B8"/><rect x="659" y="163" width="1" height="3" fill="#A3A3A3"/><rect x="663" y="164" width="1" height="2" fill="#B8B8B8"/><rect x="668" y="160" width="1" height="6" fill="#A3A3A3"/><rect x="672" y="164" width="1" height="2" fill="#B8B8B8"/><rect x="677" y="163" width="1" height="3" fill="#A3A3A3"/><rect x="681" y="164" width="1" height="2" fill="#B8B8B8"/><rect x="686" y="158" width="1" height="8" fill="#A3A3A3"/><rect x="690" y="164" width="1" height="2" fill="#B8B8B8"/><rect x="695" y="163" width="1" height="3" fill="#A3A3A3"/><rect x="699" y="164" width="1" height="2" fill="#B8B8B8"/><rect x="704" y="160" width="1" height="6" fill="#A3A3A3"/><rect x="708" y="164" width="1" height="2" fill="#B8B8B8"/><rect x="713" y="163" width="1" height="3" fill="#A3A3A3"/><rect x="717" y="164" width="1" height="2" fill="#B8B8B8"/><rect x="721" y="156" width="1" height="10" fill="#A3A3A3"/><rect x="726" y="164" width="1" height="2" fill="#B8B8B8"/><rect x="730" y="163" width="1" height="3" fill="#A3A3A3"/><rect x="735" y="164" width="1" height="2" fill="#B8B8B8"/><rect x="739" y="160" width="1" height="6" fill="#A3A3A3"/><rect x="744" y="164" width="1" height="2" fill="#B8B8B8"/><rect x="748" y="163" width="1" height="3" fill="#A3A3A3"/><rect x="753" y="164" width="1" height="2" fill="#B8B8B8"/><rect x="757" y="158" width="1" height="8" fill="#A3A3A3"/><rect x="762" y="164" width="1" height="2" fill="#B8B8B8"/><rect x="766" y="163" width="1" height="3" fill="#A3A3A3"/><rect x="771" y="164" width="1" height="2" fill="#B8B8B8"/><rect x="775" y="160" width="1" height="6" fill="#A3A3A3"/><rect x="780" y="164" width="1" height="2" fill="#B8B8B8"/><rect x="784" y="163" width="1" height="3" fill="#A3A3A3"/><rect x="788" y="164" width="1" height="2" fill="#B8B8B8"/><rect x="793" y="152" width="1" height="14" fill="#A3A3A3"/><rect x="797" y="164" width="1" height="2" fill="#B8B8B8"/><rect x="802" y="163" width="1" height="3" fill="#A3A3A3"/><rect x="806" y="164" width="1" height="2" fill="#B8B8B8"/><rect x="811" y="160" width="1" height="6" fill="#A3A3A3"/><rect x="815" y="164" width="1" height="2" fill="#B8B8B8"/><rect x="820" y="163" width="1" height="3" fill="#A3A3A3"/><rect x="824" y="164" width="1" height="2" fill="#B8B8B8"/><rect x="829" y="158" width="1" height="8" fill="#A3A3A3"/><rect x="833" y="164" width="1" height="2" fill="#B8B8B8"/><rect x="838" y="163" width="1" height="3" fill="#A3A3A3"/><rect x="842" y="164" width="1" height="2" fill="#B8B8B8"/><rect x="847" y="160" width="1" height="6" fill="#A3A3A3"/><rect x="851" y="164" width="1" height="2" fill="#B8B8B8"/><rect x="856" y="163" width="1" height="3" fill="#A3A3A3"/><rect x="860" y="164" width="1" height="2" fill="#B8B8B8"/><rect x="864" y="156" width="1" height="10" fill="#A3A3A3"/><rect x="869" y="164" width="1" height="2" fill="#B8B8B8"/><rect x="873" y="163" width="1" height="3" fill="#A3A3A3"/><rect x="878" y="164" width="1" height="2" fill="#B8B8B8"/><rect x="882" y="160" width="1" height="6" fill="#A3A3A3"/><rect x="887" y="164" width="1" height="2" fill="#B8B8B8"/><rect x="891" y="163" width="1" height="3" fill="#A3A3A3"/><rect x="896" y="164" width="1" height="2" fill="#B8B8B8"/><rect x="900" y="158" width="1" height="8" fill="#A3A3A3"/><rect x="905" y="164" width="1" height="2" fill="#B8B8B8"/><rect x="909" y="163" width="1" height="3" fill="#A3A3A3"/><rect x="914" y="164" width="1" height="2" fill="#B8B8B8"/><rect x="918" y="160" width="1" height="6" fill="#A3A3A3"/><rect x="923" y="164" width="1" height="2" fill="#B8B8B8"/><rect x="927" y="163" width="1" height="3" fill="#A3A3A3"/><rect x="931" y="164" width="1" height="2" fill="#B8B8B8"/><rect x="936" y="152" width="1" height="14" fill="#A3A3A3"/><rect x="940" y="164" width="1" height="2" fill="#B8B8B8"/><rect x="945" y="163" width="1" height="3" fill="#A3A3A3"/><rect x="949" y="164" width="1" height="2" fill="#B8B8B8"/><rect x="954" y="160" width="1" height="6" fill="#A3A3A3"/><rect x="958" y="164" width="1" height="2" fill="#B8B8B8"/><rect x="963" y="163" width="1" height="3" fill="#A3A3A3"/><rect x="967" y="164" width="1" height="2" fill="#B8B8B8"/><rect x="972" y="158" width="1" height="8" fill="#A3A3A3"/><rect x="976" y="164" width="1" height="2" fill="#B8B8B8"/><rect x="981" y="163" width="1" height="3" fill="#A3A3A3"/><rect x="985" y="164" width="1" height="2" fill="#B8B8B8"/><rect x="990" y="160" width="1" height="6" fill="#A3A3A3"/><rect x="994" y="164" width="1" height="2" fill="#B8B8B8"/><rect x="999" y="163" width="1" height="3" fill="#A3A3A3"/><rect x="1003" y="164" width="1" height="2" fill="#B8B8B8"/><rect x="1007" y="156" width="1" height="10" fill="#A3A3A3"/><rect x="1012" y="164" width="1" height="2" fill="#B8B8B8"/><rect x="1016" y="163" width="1" height="3" fill="#A3A3A3"/><rect x="1021" y="164" width="1" height="2" fill="#B8B8B8"/><rect x="1025" y="160" width="1" height="6" fill="#A3A3A3"/><rect x="1030" y="164" width="1" height="2" fill="#B8B8B8"/><rect x="1034" y="163" width="1" height="3" fill="#A3A3A3"/><rect x="1039" y="164" width="1" height="2" fill="#B8B8B8"/><rect x="1043" y="158" width="1" height="8" fill="#A3A3A3"/><rect x="1048" y="164" width="1" height="2" fill="#B8B8B8"/><rect x="1052" y="163" width="1" height="3" fill="#A3A3A3"/><rect x="1057" y="164" width="1" height="2" fill="#B8B8B8"/><rect x="1061" y="160" width="1" height="6" fill="#A3A3A3"/><rect x="1066" y="164" width="1" height="2" fill="#B8B8B8"/><rect x="1070" y="163" width="1" height="3" fill="#A3A3A3"/><rect x="1074" y="164" width="1" height="2" fill="#B8B8B8"/><rect x="1079" y="152" width="1" height="14" fill="#A3A3A3"/><rect x="148" y="152" width="1" height="15" fill="#A3A3A3"/><rect x="148" y="167" width="1" height="377" fill="#C2C2C2"/><rect x="143" y="170" width="5" height="1" fill="#A3A3A3"/><rect x="147" y="175" width="1" height="1" fill="#B8B8B8"/><rect x="145" y="179" width="3" height="1" fill="#A3A3A3"/><rect x="147" y="184" width="1" height="1" fill="#B8B8B8"/><rect x="138" y="188" width="10" height="1" fill="#A3A3A3"/><rect x="147" y="193" width="1" height="1" fill="#B8B8B8"/><rect x="145" y="197" width="3" height="1" fill="#A3A3A3"/><rect x="147" y="202" width="1" height="1" fill="#B8B8B8"/><rect x="143" y="206" width="5" height="1" fill="#A3A3A3"/><rect x="147" y="211" width="1" height="1" fill="#B8B8B8"/><rect x="145" y="215" width="3" height="1" fill="#A3A3A3"/><rect x="147" y="220" width="1" height="1" fill="#B8B8B8"/><rect x="140" y="224" width="8" height="1" fill="#A3A3A3"/><rect x="147" y="229" width="1" height="1" fill="#B8B8B8"/><rect x="145" y="233" width="3" height="1" fill="#A3A3A3"/><rect x="147" y="237" width="1" height="1" fill="#B8B8B8"/><rect x="143" y="242" width="5" height="1" fill="#A3A3A3"/><rect x="147" y="246" width="1" height="1" fill="#B8B8B8"/><rect x="145" y="251" width="3" height="1" fill="#A3A3A3"/><rect x="147" y="255" width="1" height="1" fill="#B8B8B8"/><rect x="134" y="260" width="14" height="1" fill="#A3A3A3"/><rect x="147" y="264" width="1" height="1" fill="#B8B8B8"/><rect x="145" y="269" width="3" height="1" fill="#A3A3A3"/><rect x="147" y="273" width="1" height="1" fill="#B8B8B8"/><rect x="143" y="278" width="5" height="1" fill="#A3A3A3"/><rect x="147" y="282" width="1" height="1" fill="#B8B8B8"/><rect x="145" y="287" width="3" height="1" fill="#A3A3A3"/><rect x="147" y="291" width="1" height="1" fill="#B8B8B8"/><rect x="140" y="296" width="8" height="1" fill="#A3A3A3"/><rect x="147" y="300" width="1" height="1" fill="#B8B8B8"/><rect x="145" y="304" width="3" height="1" fill="#A3A3A3"/><rect x="147" y="309" width="1" height="1" fill="#B8B8B8"/><rect x="143" y="313" width="5" height="1" fill="#A3A3A3"/><rect x="147" y="318" width="1" height="1" fill="#B8B8B8"/><rect x="145" y="322" width="3" height="1" fill="#A3A3A3"/><rect x="147" y="327" width="1" height="1" fill="#B8B8B8"/><rect x="138" y="331" width="10" height="1" fill="#A3A3A3"/><rect x="147" y="336" width="1" height="1" fill="#B8B8B8"/><rect x="145" y="340" width="3" height="1" fill="#A3A3A3"/><rect x="147" y="345" width="1" height="1" fill="#B8B8B8"/><rect x="143" y="349" width="5" height="1" fill="#A3A3A3"/><rect x="147" y="354" width="1" height="1" fill="#B8B8B8"/><rect x="145" y="358" width="3" height="1" fill="#A3A3A3"/><rect x="147" y="363" width="1" height="1" fill="#B8B8B8"/><rect x="140" y="367" width="8" height="1" fill="#A3A3A3"/><rect x="147" y="372" width="1" height="1" fill="#B8B8B8"/><rect x="145" y="376" width="3" height="1" fill="#A3A3A3"/><rect x="147" y="380" width="1" height="1" fill="#B8B8B8"/><rect x="143" y="385" width="5" height="1" fill="#A3A3A3"/><rect x="147" y="389" width="1" height="1" fill="#B8B8B8"/><rect x="145" y="394" width="3" height="1" fill="#A3A3A3"/><rect x="147" y="398" width="1" height="1" fill="#B8B8B8"/><rect x="134" y="403" width="14" height="1" fill="#A3A3A3"/><rect x="147" y="407" width="1" height="1" fill="#B8B8B8"/><rect x="145" y="412" width="3" height="1" fill="#A3A3A3"/><rect x="147" y="416" width="1" height="1" fill="#B8B8B8"/><rect x="143" y="421" width="5" height="1" fill="#A3A3A3"/><rect x="147" y="425" width="1" height="1" fill="#B8B8B8"/><rect x="145" y="430" width="3" height="1" fill="#A3A3A3"/><rect x="147" y="434" width="1" height="1" fill="#B8B8B8"/><rect x="140" y="439" width="8" height="1" fill="#A3A3A3"/><rect x="147" y="443" width="1" height="1" fill="#B8B8B8"/><rect x="145" y="447" width="3" height="1" fill="#A3A3A3"/><rect x="147" y="452" width="1" height="1" fill="#B8B8B8"/><rect x="143" y="456" width="5" height="1" fill="#A3A3A3"/><rect x="147" y="461" width="1" height="1" fill="#B8B8B8"/><rect x="145" y="465" width="3" height="1" fill="#A3A3A3"/><rect x="147" y="470" width="1" height="1" fill="#B8B8B8"/><rect x="138" y="474" width="10" height="1" fill="#A3A3A3"/><rect x="147" y="479" width="1" height="1" fill="#B8B8B8"/><rect x="145" y="483" width="3" height="1" fill="#A3A3A3"/><rect x="147" y="488" width="1" height="1" fill="#B8B8B8"/><rect x="143" y="492" width="5" height="1" fill="#A3A3A3"/><rect x="147" y="497" width="1" height="1" fill="#B8B8B8"/><rect x="145" y="501" width="3" height="1" fill="#A3A3A3"/><rect x="147" y="506" width="1" height="1" fill="#B8B8B8"/><rect x="140" y="510" width="8" height="1" fill="#A3A3A3"/><rect x="147" y="515" width="1" height="1" fill="#B8B8B8"/><rect x="145" y="519" width="3" height="1" fill="#A3A3A3"/><rect x="147" y="523" width="1" height="1" fill="#B8B8B8"/><rect x="143" y="528" width="5" height="1" fill="#A3A3A3"/><rect x="147" y="532" width="1" height="1" fill="#B8B8B8"/><rect x="145" y="537" width="3" height="1" fill="#A3A3A3"/><rect x="147" y="541" width="1" height="1" fill="#B8B8B8"/><rect x="135" y="159" width="12" height="1" fill="#CFCFCF"/><rect x="141" y="153" width="1" height="12" fill="#CFCFCF"/></svg>
<div class="t" style="left:223px;top:153.88px;font-size:9px;color:#333333;font-weight:400;font-style:normal;">0</div>
<div class="t" style="left:366px;top:153.88px;font-size:9px;color:#333333;font-weight:400;font-style:normal;">1</div>
<div class="t" style="left:509px;top:153.88px;font-size:9px;color:#333333;font-weight:400;font-style:normal;">2</div>
<div class="t" style="left:652px;top:153.88px;font-size:9px;color:#333333;font-weight:400;font-style:normal;">3</div>
<div class="t" style="left:795px;top:153.88px;font-size:9px;color:#333333;font-weight:400;font-style:normal;">4</div>
<div class="t" style="left:938px;top:153.88px;font-size:9px;color:#333333;font-weight:400;font-style:normal;">5</div>
<div class="t" style="left:134.5px;top:271px;font-size:9px;color:#333;transform-origin:0 0;transform:rotate(-90deg)">10</div>
<div class="t" style="left:134.5px;top:410px;font-size:9px;color:#333;transform-origin:0 0;transform:rotate(-90deg)">9</div>
<svg class="s" style="left:0;top:0" width="1082" height="546"><path d="M117 163.5 L113.5 167 L117 170.5" fill="none" stroke="#555" stroke-width="1.5"/><path d="M83 222 L87.5 226 L83 230 Z" fill="#666"/><rect x="12.5" y="307" width="21.5" height="8" fill="#D6D6D6" stroke="#FFFFFF" stroke-width="1"/><rect x="14" y="304.5" width="9" height="0.8" fill="#8EA4C8"/><rect x="12" y="340" width="22" height="4" rx="0.8" fill="#2E75B6"/><rect x="14" y="341.5" width="9" height="1" fill="#B9D3EE"/><path d="M12 374.5 H34" stroke="#8FC062" stroke-width="1" stroke-dasharray="1.5 1"/><rect x="12" y="407" width="22" height="4" rx="0.8" fill="#5B9BD5"/><rect x="14" y="408.5" width="9" height="1" fill="#D2E4F5"/><path d="M12.5 439 V460.5 H33" fill="none" stroke="#5B9BD5" stroke-width="1"/><path d="M31 458.5 L34 460.5 L31 462.5" fill="none" stroke="#5B9BD5" stroke-width="1"/></svg>
<div class="a" style="left:214px;top:167px;width:7px;height:378px;background:linear-gradient(to right,rgba(0,0,0,0),rgba(0,0,0,0.09));"></div>
<div class="a" style="left:221px;top:167px;width:1px;height:378px;background:#B9BCC2;"></div>
<div class="a" style="left:222px;top:167px;width:860px;height:378px;background:#FFFFFF;"></div>
<svg class="s" style="left:0;top:0" width="1082" height="546"><path d="M257.5 167 V545" stroke="#E0E0E0" stroke-width="1" stroke-dasharray="4 2"/></svg>
<div class="t" style="left:319px;top:296.70px;font-size:21.5px;color:#B8B8B8;font-weight:400;font-style:italic;transform-origin:0 0;transform:scaleX(1.0355);">Parent entity</div>
<div class="a" style="left:311px;top:335px;width:357px;height:210px;background:#D6D6D6;"></div>
<div class="a" style="left:319px;top:343px;width:341px;height:57px;background:#2E75B6;border:1px solid #FFFFFF"></div>
<div class="t" style="left:335.5px;top:361.02px;font-size:19px;color:#FFFFFF;font-weight:400;font-style:normal;transform-origin:0 0;transform:scaleX(0.9074);-webkit-text-stroke:0.5px #fff;">name_PK (PK)</div>
<svg class="s" style="left:0;top:0" width="1082" height="546"><path d="M320 408.5 H659" stroke="#86BA52" stroke-width="1" stroke-dasharray="2 1"/></svg>
<div class="a" style="left:319px;top:417px;width:341px;height:57px;background:#5B9BD5;border:1px solid #FFFFFF"></div>
<div class="t" style="left:335.5px;top:434.32px;font-size:19px;color:#FFFFFF;font-weight:400;font-style:normal;transform-origin:0 0;transform:scaleX(0.9961);-webkit-text-stroke:0.5px #fff;">attribute name</div>
<div class="a" style="left:319px;top:482px;width:341px;height:56px;background:#5B9BD5;border:1px solid #FFFFFF"></div>
<div class="t" style="left:335.5px;top:499.32px;font-size:19px;color:#FFFFFF;font-weight:400;font-style:normal;transform-origin:0 0;transform:scaleX(0.9961);-webkit-text-stroke:0.5px #fff;">attribute name</div>
<div class="a" style="left:720px;top:277px;width:362px;height:268px;border:2px solid #4FC24F;border-right:none;border-bottom:none"></div>
<div class="a" style="left:1080px;top:277px;width:1px;height:268px;background:#4FC24F;"></div>
<div class="t" style="left:730.8px;top:294.70px;font-size:21.5px;color:#B8B8B8;font-weight:400;font-style:italic;transform-origin:0 0;transform:scaleX(1.0718);">Child entity</div>
<div class="a" style="left:723px;top:333px;width:356px;height:212px;background:#D6D6D6;"></div>
<div class="a" style="left:730px;top:341px;width:342px;height:57px;background:#2E75B6;border:1px solid #FFFFFF"></div>
<div class="t" style="left:746.6px;top:359.42px;font-size:19px;color:#FFFFFF;font-weight:400;font-style:normal;transform-origin:0 0;transform:scaleX(0.9961);-webkit-text-stroke:0.5px #fff;">attribute name</div>
<svg class="s" style="left:0;top:0" width="1082" height="546"><path d="M731 406.5 H1071" stroke="#86BA52" stroke-width="1" stroke-dasharray="2 1"/></svg>
<div class="a" style="left:730px;top:414px;width:342px;height:57px;background:#5B9BD5;border:1px solid #A09A95"></div>
<div class="a" style="left:731px;top:471px;width:340px;height:1px;background:#FFFFFF;"></div>
<div class="t" style="left:746.6px;top:432.52px;font-size:19px;color:#FFFFFF;font-weight:400;font-style:normal;transform-origin:0 0;transform:scaleX(0.9961);-webkit-text-stroke:0.5px #fff;">attribute name</div>
<div class="a" style="left:730px;top:480px;width:342px;height:56px;background:#5B9BD5;border:1px solid #FFFFFF"></div>
<div class="t" style="left:746.6px;top:498.12px;font-size:19px;color:#FFFFFF;font-weight:400;font-style:normal;transform-origin:0 0;transform:scaleX(0.9961);-webkit-text-stroke:0.5px #fff;">attribute name</div>
<svg class="s" style="left:0;top:0" width="1082" height="546"><rect x="728.0" y="412.5" width="5" height="5" fill="#FFFFFF" stroke="#8A8A8A" stroke-width="1"/><path d="M728.5 413 L732.5 417" stroke="#BBBBBB" stroke-width="0.8"/><rect x="728.0" y="440.5" width="5" height="5" fill="#FFFFFF" stroke="#8A8A8A" stroke-width="1"/><path d="M728.5 441 L732.5 445" stroke="#BBBBBB" stroke-width="0.8"/><rect x="728.0" y="468.5" width="5" height="5" fill="#FFFFFF" stroke="#8A8A8A" stroke-width="1"/><path d="M728.5 469 L732.5 473" stroke="#BBBBBB" stroke-width="0.8"/><rect x="898.0" y="412.5" width="5" height="5" fill="#FFFFFF" stroke="#8A8A8A" stroke-width="1"/><path d="M898.5 413 L902.5 417" stroke="#BBBBBB" stroke-width="0.8"/><rect x="898.0" y="468.5" width="5" height="5" fill="#FFFFFF" stroke="#8A8A8A" stroke-width="1"/><path d="M898.5 469 L902.5 473" stroke="#BBBBBB" stroke-width="0.8"/><rect x="1069.0" y="412.5" width="5" height="5" fill="#FFFFFF" stroke="#8A8A8A" stroke-width="1"/><path d="M1069.5 413 L1073.5 417" stroke="#BBBBBB" stroke-width="0.8"/><rect x="1069.0" y="440.5" width="5" height="5" fill="#FFFFFF" stroke="#8A8A8A" stroke-width="1"/><path d="M1069.5 441 L1073.5 445" stroke="#BBBBBB" stroke-width="0.8"/><rect x="1069.0" y="468.5" width="5" height="5" fill="#FFFFFF" stroke="#8A8A8A" stroke-width="1"/><path d="M1069.5 469 L1073.5 473" stroke="#BBBBBB" stroke-width="0.8"/></svg>
<div class="a" style="left:796px;top:87px;width:161px;height:378px;background:#FFFFFF;border:1px solid #C6C6C6;box-shadow:1px 1px 2px rgba(0,0,0,0.2)"></div>
<div class="a" style="left:798px;top:266px;width:157px;height:21px;background:#C6C6C6;"></div>
<div class="t" style="left:825px;top:94.31px;font-size:11.8px;color:#444444;font-weight:400;font-style:normal;transform-origin:0 0;transform:scaleX(0.8623);">Set Primary Key</div>
<div class="t" style="left:825px;top:115.71px;font-size:11.8px;color:#444444;font-weight:400;font-style:normal;transform-origin:0 0;transform:scaleX(0.8570);">Set Foreign Key</div>
<div class="t" style="left:825px;top:136.81px;font-size:11.8px;color:#444444;font-weight:400;font-style:normal;transform-origin:0 0;transform:scaleX(0.9185);">Set Optional Attribute</div>
<div class="t" style="left:825px;top:158.21px;font-size:11.8px;color:#444444;font-weight:400;font-style:normal;transform-origin:0 0;transform:scaleX(0.8496);">Set Required</div>
<div class="t" style="left:825px;top:181.01px;font-size:11.8px;color:#444444;font-weight:400;font-style:normal;transform-origin:0 0;transform:scaleX(0.8441);">Show ShapeSheet</div>
<div class="a" style="left:825.00px;top:192.50px;width:6.65px;height:1px;background:#8A8A8A"></div>
<div class="t" style="left:825px;top:205.71px;font-size:11.8px;color:#444444;font-weight:400;font-style:normal;transform-origin:0 0;transform:scaleX(0.8443);">Cut</div>
<div class="a" style="left:837.74px;top:217.20px;width:2.76px;height:1px;background:#8A8A8A"></div>
<div class="t" style="left:825px;top:226.81px;font-size:11.8px;color:#444444;font-weight:400;font-style:normal;transform-origin:0 0;transform:scaleX(0.8712);">Copy</div>
<div class="a" style="left:825.00px;top:238.30px;width:7.43px;height:1px;background:#8A8A8A"></div>
<div class="t" style="left:825px;top:247.91px;font-size:11.8px;color:#444444;font-weight:400;font-style:normal;transform-origin:0 0;transform:scaleX(0.8120);">Paste</div>
<div class="t" style="left:825px;top:271.01px;font-size:11.8px;color:#444444;font-weight:400;font-style:normal;transform-origin:0 0;transform:scaleX(0.9114);">Insert &#x27;Attribute&#x27; Before</div>
<div class="a" style="left:825.00px;top:282.50px;width:2.99px;height:1px;background:#8A8A8A"></div>
<div class="t" style="left:825px;top:292.41px;font-size:11.8px;color:#444444;font-weight:400;font-style:normal;transform-origin:0 0;transform:scaleX(0.9332);">Insert &#x27;Attribute&#x27; After</div>
<div class="a" style="left:828.06px;top:303.90px;width:6.12px;height:1px;background:#8A8A8A"></div>
<div class="t" style="left:825px;top:315.11px;font-size:11.8px;color:#444444;font-weight:400;font-style:normal;transform-origin:0 0;transform:scaleX(0.8995);">Group</div>
<div class="a" style="left:825.00px;top:326.60px;width:8.26px;height:1px;background:#8A8A8A"></div>
<div class="t" style="left:825px;top:336.51px;font-size:11.8px;color:#444444;font-weight:400;font-style:normal;transform-origin:0 0;transform:scaleX(0.8992);">Container</div>
<div class="a" style="left:855.67px;top:348.00px;width:5.90px;height:1px;background:#8A8A8A"></div>
<div class="t" style="left:825px;top:361.11px;font-size:11.8px;color:#444444;font-weight:400;font-style:normal;transform-origin:0 0;transform:scaleX(0.9065);">Hyperlink...</div>
<div class="a" style="left:832.73px;top:372.60px;width:5.34px;height:1px;background:#8A8A8A"></div>
<div class="t" style="left:825px;top:381.11px;font-size:11.8px;color:#444444;font-weight:400;font-style:normal;transform-origin:0 0;transform:scaleX(0.9283);">Add Comment</div>
<div class="a" style="left:825.00px;top:392.60px;width:7.31px;height:1px;background:#8A8A8A"></div>
<div class="t" style="left:825px;top:402.51px;font-size:11.8px;color:#444444;font-weight:400;font-style:normal;transform-origin:0 0;transform:scaleX(0.8883);">Edit Text</div>
<div class="a" style="left:840.16px;top:414.00px;width:2.90px;height:1px;background:#8A8A8A"></div>
<div class="t" style="left:825px;top:426.41px;font-size:11.8px;color:#444444;font-weight:400;font-style:normal;transform-origin:0 0;transform:scaleX(0.8426);">Data</div>
<div class="a" style="left:825.00px;top:437.90px;width:7.19px;height:1px;background:#8A8A8A"></div>
<div class="t" style="left:825px;top:447.71px;font-size:11.8px;color:#444444;font-weight:400;font-style:normal;transform-origin:0 0;transform:scaleX(0.8761);">Format Shape</div>
<div class="a" style="left:860.60px;top:459.20px;width:6.90px;height:1px;background:#8A8A8A"></div>
<div class="a" style="left:826px;top:174px;width:129px;height:1px;background:#E3E3E3;"></div>
<div class="a" style="left:826px;top:197px;width:129px;height:1px;background:#E3E3E3;"></div>
<div class="a" style="left:826px;top:263px;width:129px;height:1px;background:#E3E3E3;"></div>
<div class="a" style="left:826px;top:308px;width:129px;height:1px;background:#E3E3E3;"></div>
<div class="a" style="left:826px;top:353px;width:129px;height:1px;background:#E3E3E3;"></div>
<div class="a" style="left:826px;top:419px;width:129px;height:1px;background:#E3E3E3;"></div>
<svg class="s" style="left:0;top:0" width="1082" height="546"><rect x="802.5" y="182" width="11" height="10" fill="#FFFFFF" stroke="#6E6E6E" stroke-width="1"/><rect x="802.5" y="182" width="11" height="2.5" fill="#6E6E6E"/><rect x="803.5" y="185.5" width="3" height="1.2" fill="#E0623A"/><rect x="807.5" y="185.5" width="5" height="1.2" fill="#C8C8C8"/><rect x="803.5" y="187.7" width="3" height="1.2" fill="#E0623A"/><rect x="807.5" y="187.7" width="5" height="1.2" fill="#C8C8C8"/><rect x="803.5" y="189.9" width="3" height="1.2" fill="#E0623A"/><rect x="807.5" y="189.9" width="5" height="1.2" fill="#C8C8C8"/><path d="M803.5 203.5 L810.5 211.5 M811.5 203.5 L804.5 211.5" stroke="#6A6A6A" stroke-width="1.4" fill="none"/><circle cx="804.5" cy="213" r="2.4" fill="none" stroke="#3D7CC9" stroke-width="1.3"/><circle cx="811.5" cy="213" r="2.4" fill="none" stroke="#3D7CC9" stroke-width="1.3"/><path d="M802.5 226 H807.5 L809 227.5 V234 H802.5 Z" fill="#FFFFFF" stroke="#6A6A6A" stroke-width="1"/><path d="M804 229 H806 M804 231 H806 M804 233 H806" stroke="#3D7CC9" stroke-width="1"/><path d="M807.5 229 H812 L814.5 231.5 V237 H807.5 Z" fill="#FFFFFF" stroke="#6A6A6A" stroke-width="1"/><rect x="809" y="232.5" width="4" height="3.5" fill="#3D7CC9" opacity="0.8"/><rect x="802.5" y="244.5" width="10" height="13" fill="#EBC37B"/><path d="M804.5 246.5 V244.5 H806.5 V242 H808.5 V244.5 H810.5 V246.5 Z" fill="#6A6A6A"/><path d="M808.5 250.5 H813 L815.5 253 V258.5 H808.5 Z" fill="#FFFFFF" stroke="#6A6A6A" stroke-width="1"/><path d="M943 316.5 L946.5 320 L943 323.5 Z" fill="#444"/><path d="M943 338.5 L946.5 342 L943 345.5 Z" fill="#444"/><path d="M943 427.5 L946.5 431 L943 434.5 Z" fill="#444"/><circle cx="806.5" cy="362.5" r="4.5" fill="none" stroke="#777" stroke-width="1"/><path d="M802 362.5 H811 M806.5 358 Q803.5 362.5 806.5 367 M806.5 358 Q809.5 362.5 806.5 367" fill="none" stroke="#777" stroke-width="0.9"/><rect x="802.5" y="366.5" width="7" height="4.5" rx="2.25" fill="#FFFFFF" stroke="#3D7CC9" stroke-width="1.5"/><rect x="807.5" y="366.5" width="7" height="4.5" rx="2.25" fill="none" stroke="#3D7CC9" stroke-width="1.5"/><path d="M806 381.5 H814 V388.5 H807.5 L805 391.5 V388.5 H802.5 V386" fill="none" stroke="#777" stroke-width="1"/><path d="M801 383 H806 M803.5 380.5 V385.5" stroke="#3E9B6E" stroke-width="1.4"/><text x="803.5" y="412" font-family="Liberation Sans" font-size="12" fill="#333" stroke="#333" stroke-width="0.3">A</text></svg>
<div class="a" style="left:796px;top:479px;width:204px;height:56px;background:#FFFFFF;border:1px solid #CCCCCC"></div>
<div class="a" style="left:830px;top:483px;width:1px;height:48px;background:#E0E0E0;"></div>
<div class="a" style="left:960px;top:483px;width:1px;height:48px;background:#E0E0E0;"></div>
<div class="t" style="left:966px;top:512.17px;font-size:11.5px;color:#444444;font-weight:400;font-style:normal;transform-origin:0 0;transform:scaleX(0.8108);">Styles</div>
<svg class="s" style="left:0;top:0" width="1082" height="546"><rect x="802.5" y="489.5" width="13" height="11" fill="#FFFFFF" stroke="#6E6E6E" stroke-width="1"/><text x="804" y="496" font-family="Liberation Sans" font-size="6" font-weight="700" fill="#3D7CC9">A</text><path d="M808.5 493 H813.5 M808.5 495 H813.5 M804 498 H813.5" stroke="#9A9A9A" stroke-width="0.8"/><path d="M821.5 494.5 H826.5 L824.0 497.0 Z" fill="#6A6A6A"/><text x="836" y="500.5" font-family="Liberation Sans" font-size="12.5" fill="#555">A</text><path d="M843.5 490.5 L845.5 488.5 L847.5 490.5 Z" fill="#3D7CC9"/><text x="856.5" y="500.5" font-family="Liberation Sans" font-size="9.5" fill="#555">A</text><path d="M863.5 488.5 H867.5 L865.5 490.5 Z" fill="#3D7CC9"/><text x="875.5" y="499" font-family="Liberation Sans" font-size="11" font-weight="700" fill="#444">B</text><text x="895.5" y="499" font-family="Liberation Serif" font-size="12" font-style="italic" font-weight="700" fill="#444">I</text><path d="M912.5 494 L918 490.5 L921.5 495 L917.5 500.5 Z" fill="#EBC37B"/><path d="M917.5 491 L923.5 486.5 L926.5 490 L921 495 Z" fill="#6A6A6A"/><rect x="931.5" y="490" width="8" height="8.5" fill="none" stroke="#3D7CC9" stroke-width="1.1"/><path d="M938 489.5 A5 5 0 1 1 945 496" fill="none" stroke="#3D7CC9" stroke-width="1.1"/><path d="M941 492 L945 496 L941 500.5 L937 496 Z" fill="#FFFFFF" stroke="#3D7CC9" stroke-width="1.1"/><path d="M950.5 493.5 H955.5 L953.0 496.0 Z" fill="#6A6A6A"/><rect x="802.5" y="520" width="4" height="4" fill="none" stroke="#3D7CC9" stroke-width="1.1"/><path d="M804.5 520 V516.5 H814" fill="none" stroke="#777" stroke-width="1"/><path d="M811.5 512.5 H816 M813.75 510.5 V515" stroke="#555" stroke-width="1"/><rect x="833.5" y="513.5" width="13" height="10.5" fill="#FFFFFF" stroke="#6E6E6E" stroke-width="1"/><path d="M836 517.5 H844.5 M837.5 520 H843" stroke="#3D7CC9" stroke-width="1.1"/><path d="M852.5 517.5 H857.5 L855.0 520.0 Z" fill="#6A6A6A"/><rect x="867" y="513" width="1" height="12" fill="#777"/><rect x="869.5" y="513.5" width="5" height="2" fill="#FFFFFF" stroke="#777" stroke-width="0.9"/><rect x="869" y="516.8" width="8" height="3" fill="#EBC37B"/><path d="M870 523 H875 M872 521.5 L870 523 L872 524.5" fill="none" stroke="#3D7CC9" stroke-width="1.1"/><path d="M883 517.5 H888 L885.5 520.0 Z" fill="#6A6A6A"/><path d="M896.5 515 V512.5 H899" fill="none" stroke="#777" stroke-width="1"/><path d="M908.5 522 V524.5 H906" fill="none" stroke="#777" stroke-width="1"/><rect x="898.5" y="514.5" width="8" height="8" fill="#EBC37B"/><path d="M916 517.5 H921 L918.5 520.0 Z" fill="#6A6A6A"/><rect x="929.5" y="515" width="5" height="5" fill="#EBC37B"/><rect x="926.5" y="512.5" width="5" height="4.5" fill="#FFFFFF" stroke="#777" stroke-width="1"/><rect x="934.5" y="520.5" width="5.5" height="4.5" fill="#FFFFFF" stroke="#777" stroke-width="1"/><path d="M946.5 517.5 H951.5 L949.0 520.0 Z" fill="#6A6A6A"/><rect x="969.5" y="487.5" width="16" height="16" rx="3" fill="#FFFFFF" stroke="#6E6E6E" stroke-width="1"/><path d="M977 505.5 Q978.5 501 982 500 L984 502 Q981.5 505.5 974 506 Z" fill="#3D7CC9"/><path d="M982.5 500 L990 492 L991.5 493.5 L985 502 Z" fill="#6E6E6E"/><path d="M990 493.5 H995 L992.5 496.0 Z" fill="#6A6A6A"/></svg>
<div class="a" style="left:0px;top:0px;width:1082px;height:1px;background:#8C8C8C;"></div>
<div class="a" style="left:0px;top:0px;width:1px;height:546px;background:#787878;"></div>
<div class="a" style="left:1081px;top:0px;width:1px;height:546px;background:#8C8C8C;"></div>
<div class="a" style="left:0px;top:545px;width:1082px;height:1px;background:#6A6A6A;"></div>
</body></html>
